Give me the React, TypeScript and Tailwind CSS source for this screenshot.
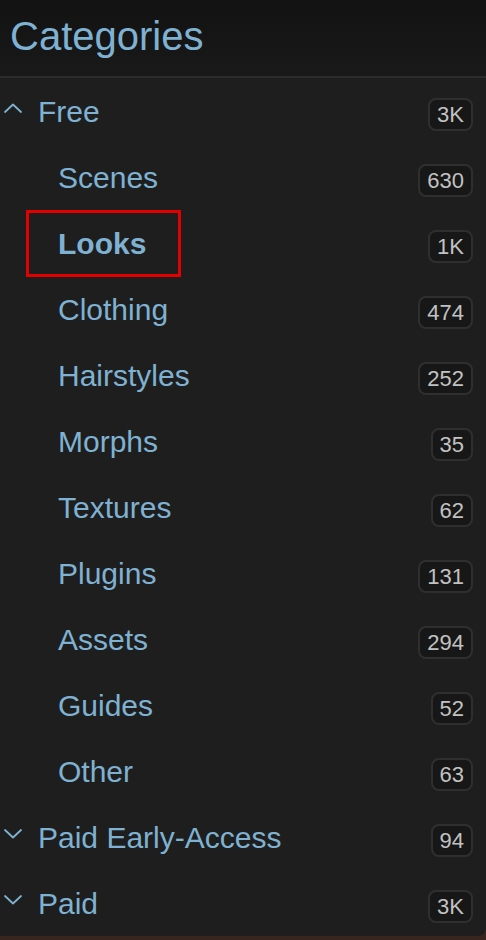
import React from "react";

type Item = { name: string; count: string; bold?: boolean; marked?: boolean };

const freeItems: Item[] = [
    { name: "Scenes", count: "630" },
    { name: "Looks", count: "1K", bold: true, marked: true },
    { name: "Clothing", count: "474" },
    { name: "Hairstyles", count: "252" },
    { name: "Morphs", count: "35" },
    { name: "Textures", count: "62" },
    { name: "Plugins", count: "131" },
    { name: "Assets", count: "294" },
    { name: "Guides", count: "52" },
    { name: "Other", count: "63" },
];

function Chevron({ up }: { up?: boolean }) {
    return (
        <svg width="20" height="12" viewBox="0 0 20 12" className="shrink-0">
            <path
                d={up ? "M2 10 L10 2.5 L18 10" : "M2 2 L10 9.5 L18 2"}
                fill="none"
                stroke="#7fb2d2"
                strokeWidth="1.8"
                strokeLinecap="round"
                strokeLinejoin="round"
            />
        </svg>
    );
}

function Badge({ count }: { count: string }) {
    return (
        <div className="mt-[7px] h-[33px] px-[7px] flex items-center rounded-lg border-2 border-[#2f2f2f] bg-[#171717] text-[22px] text-[#c2c2c2] leading-none">
            {count}
        </div>
    );
}

function TopRow({ name, count, open }: { name: string; count: string; open?: boolean }) {
    return (
        <div className="h-[66px] flex items-center pr-[13px]">
            <div className="w-[38px] pl-[3px] flex items-center -mt-[6px]">
                <Chevron up={open} />
            </div>
            <div className="flex-1 text-[30px] text-[#7fb2d2]">{name}</div>
            <Badge count={count} />
        </div>
    );
}

function SubRow({ item }: { item: Item }) {
    return (
        <div className="relative h-[66px] flex items-center pl-[58px] pr-[13px]">
            <div
                className={
                    item.bold
                        ? "flex-1 text-[30px] font-bold text-[#7fb2d2]"
                        : "flex-1 text-[30px] text-[#7fb2d2]"
                }
            >
                {item.name}
            </div>
            <Badge count={item.count} />
            {item.marked && (
                <div className="absolute left-[26px] top-0 w-[155px] h-[67px] border-[3px] border-[#e30000]" />
            )}
        </div>
    );
}

export default function App() {
    return (
        <div
            className="w-[486px] h-[940px] bg-[#3a2420] overflow-hidden"
            style={{ fontFamily: '"Liberation Sans", Arial, sans-serif' }}
        >
            <div className="h-[936px] bg-[#1e1e1e] rounded-br-lg flex flex-col">
                <div className="h-[78px] shrink-0 bg-gradient-to-b from-[#121212] to-[#191919] border-b-2 border-[#2c2c2c] flex items-center pl-[10px] pb-[4px]">
                    <div className="text-[40px] text-[#7fb2d2] leading-none">Categories</div>
                </div>
                <TopRow name="Free" count="3K" open />
                {freeItems.map((item) => (
                    <SubRow key={item.name} item={item} />
                ))}
                <TopRow name="Paid Early-Access" count="94" />
                <TopRow name="Paid" count="3K" />
            </div>
        </div>
    );
}
